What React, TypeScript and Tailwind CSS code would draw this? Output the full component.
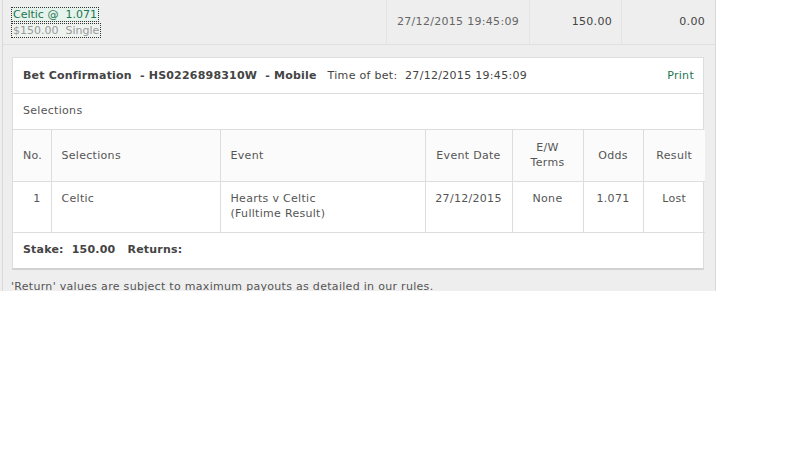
import React from "react";

const font = { fontFamily: '"DejaVu Sans", Verdana, sans-serif' };

const cols = [
  { label: "No.", w: "w-[38px]", align: "text-left" },
  { label: "Selections", w: "w-[169px]", align: "text-left" },
  { label: "Event", w: "w-[205px]", align: "text-left" },
  { label: "Event Date", w: "w-[87px]", align: "text-center" },
  { label: "E/W\nTerms", w: "w-[71px]", align: "text-center" },
  { label: "Odds", w: "w-[60px]", align: "text-center" },
  { label: "Result", w: "w-[62px]", align: "text-center" },
];

export default function App() {
  return (
    <div className="h-[450px] w-[800px] bg-white text-[11px] tracking-[0.3px] text-[#555]" style={font}>
      <div className="h-[291px] w-[716px] overflow-hidden bg-[#eeeeee] pl-[2px]">
        <div className="h-full border-l border-r border-[#d9d9d9]">
          {/* summary row */}
          <div className="flex h-[45px] border-b border-[#e0e0e0]">
            <div className="flex w-[384px] flex-col items-start justify-center gap-[1px] border-r border-[#e4e4e4] pl-[8px] tracking-normal">
              <span className="border border-dotted border-[#333] bg-[#e6f3ec] px-[1px] leading-[13px] text-[#1c7650]">
                Celtic @&nbsp; 1.071
              </span>
              <span className="border border-dotted border-[#333] bg-[#eef3f0] px-[1px] leading-[13px] text-[#9a9a9a]">
                $150.00&nbsp; Single
              </span>
            </div>
            <div className="flex w-[143px] items-center justify-center border-r border-[#e4e4e4] text-[#666]">
              27/12/2015 19:45:09
            </div>
            <div className="flex w-[92px] items-center justify-end border-r border-[#e4e4e4] pr-[9px] text-[#444]">
              150.00
            </div>
            <div className="flex flex-1 items-center justify-end pr-[10px] text-[#444]">0.00</div>
          </div>

          {/* confirmation card */}
          <div className="ml-[9px] mt-[12px] w-[692px] border border-b-2 border-[#dddddd] border-b-[#d2d2d2] bg-white">
            <div className="flex h-[36px] items-center border-b border-[#dddddd] pl-[10px] pr-[9px] pt-[1px]">
              <span className="font-bold tracking-[0.2px] text-[#444]">
                Bet Confirmation&nbsp; - HS0226898310W&nbsp; - Mobile
              </span>
              <span className="ml-[11px] text-[#444]">Time of bet:&nbsp; 27/12/2015 19:45:09</span>
              <span className="ml-auto text-[#1c7650]">Print</span>
            </div>
            <div className="flex h-[36px] items-center border-b border-[#dddddd] px-[10px] text-[#555]">
              Selections
            </div>
            <table className="w-full table-fixed border-collapse">
              <thead>
                <tr className="h-[51px] bg-[#fbfbfb]">
                  {cols.map((c, i) => (
                    <th
                      key={c.label}
                      className={`${c.w} ${c.align} whitespace-pre-line border-b border-[#dddddd] px-[10px] align-middle font-normal leading-[15px] text-[#555] ${
                        i < cols.length - 1 ? "border-r" : ""
                      }`}
                    >
                      {c.label}
                    </th>
                  ))}
                </tr>
              </thead>
              <tbody>
                <tr className="h-[51px]">
                  <td className="border-b border-r border-[#dddddd] px-[10px] pt-[9px] text-right align-top">1</td>
                  <td className="border-b border-r border-[#dddddd] px-[10px] pt-[9px] align-top">Celtic</td>
                  <td className="border-b border-r border-[#dddddd] px-[10px] pt-[9px] align-top leading-[15px]">
                    Hearts v Celtic
                    <br />
                    (Fulltime Result)
                  </td>
                  <td className="border-b border-r border-[#dddddd] pt-[9px] text-center align-top">27/12/2015</td>
                  <td className="border-b border-r border-[#dddddd] pt-[9px] text-center align-top">None</td>
                  <td className="border-b border-r border-[#dddddd] pt-[9px] text-center align-top">1.071</td>
                  <td className="border-b border-[#dddddd] pt-[9px] text-center align-top">Lost</td>
                </tr>
              </tbody>
            </table>
            <div className="flex h-[35px] items-center px-[10px] font-bold tracking-[0.2px] text-[#444]">
              Stake:&nbsp; 150.00&nbsp;&nbsp; Returns:
            </div>
          </div>

          <div className="ml-[8px] mt-[9px] leading-[15px] text-[#555]">
            'Return' values are subject to maximum payouts as detailed in our rules.
          </div>
        </div>
      </div>
    </div>
  );
}
